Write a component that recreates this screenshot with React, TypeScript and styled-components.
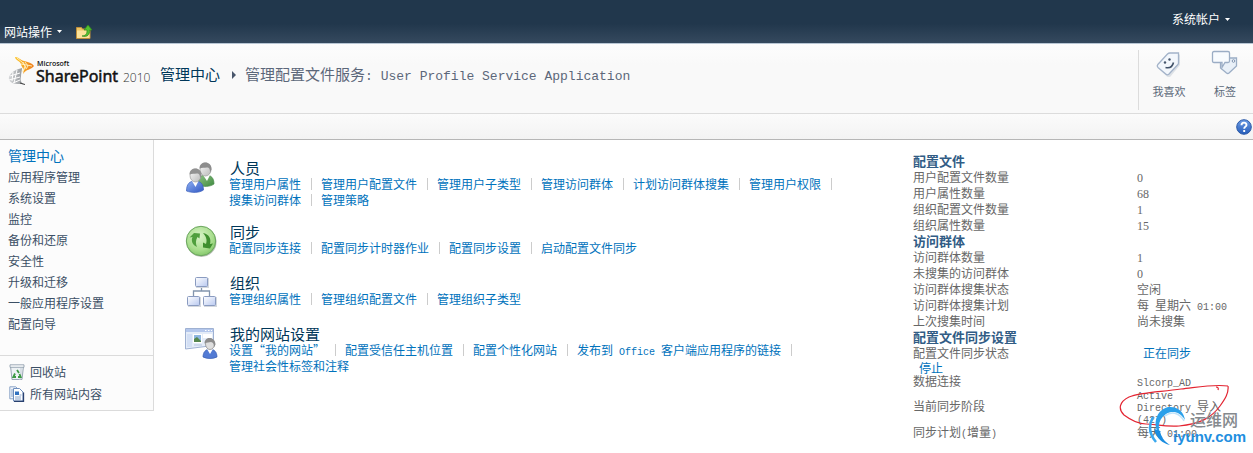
import React from 'react';
import styled, { createGlobalStyle } from 'styled-components';

const cjk = '"Noto Sans CJK SC", "Liberation Sans", sans-serif';

const GlobalStyle = createGlobalStyle`
  * { box-sizing: border-box; }
  body {
    margin: 0;
    background: #fff;
    color: #676767;
    font: 12px/16px ${cjk};
  }
  a { text-decoration: none; }
  button { font: inherit; border: 0; padding: 0; background: none; cursor: pointer; }
  svg { display: block; flex: none; }
  ul { list-style: none; margin: 0; padding: 0; }
`;

const Latin = styled.span<{ $size?: number }>`
  font-family: "Liberation Mono", monospace;
  font-size: ${(p) => p.$size ?? 10}px;
  line-height: 0;
  white-space: pre-wrap;
`;

const Digits = styled.span`
  font-family: "Liberation Serif", serif;
  line-height: 0;
`;

const TopBar = styled.div`
  height: 44px;
  display: flex;
  justify-content: space-between;
  background: linear-gradient(#21374c 0, #21374c 55%, #35495e 100%);
  border-bottom: 1px solid #b8c6d4;
`;

const SiteActions = styled.div`
  display: flex;
  align-items: center;
  gap: 14px;
  padding: 20px 0 0 4px;
`;

const MenuButton = styled.button`
  display: flex;
  align-items: center;
  gap: 5px;
  color: #fff;
`;

const AccountMenu = styled(MenuButton)`
  align-self: flex-start;
  padding: 11px 23px 0 0;
`;

const Header = styled.header`
  height: 70px;
  display: flex;
  align-items: flex-start;
  padding-left: 8px;
  background: linear-gradient(#fdfdfd, #f9f9f9 30%);
  border-bottom: 1px solid #dcdcdc;
`;

const LogoLink = styled.a`
  margin-top: 11px;
  margin-right: 8px;
`;

const Title = styled.h1`
  flex: 1;
  display: flex;
  align-items: center;
  margin: 20px 0 0;
  font-size: 15px;
  line-height: 20px;
  font-weight: 400;
  color: #5c677a;
  a { color: #003759; }
  svg { margin: 2px 9px 0 12px; }
`;

const Social = styled.div`
  display: flex;
  margin-top: 6px;
  height: 60px;
  padding-left: 2px;
  border-left: 1px solid #dcdcdc;
`;

const SocialButton = styled.button`
  display: flex;
  flex-direction: column;
  align-items: center;
  width: 56px;
  gap: 5px;
  font-size: 11px;
  line-height: 16px;
  color: #5d6a7a;
`;

const Ribbon = styled.div`
  height: 26px;
  display: flex;
  justify-content: flex-end;
  align-items: center;
  padding-right: 1px;
  background: linear-gradient(#fbfbfb, #f3f3f3);
  border-bottom: 1px solid #b6b6b6;
`;

const Body = styled.div`
  display: grid;
  grid-template-columns: 154px minmax(0, 1fr) 340px;
  align-items: start;
`;

const Sidebar = styled.nav`
  background: #fcfcfc;
  border: solid #dbdbdb;
  border-width: 0 1px 1px 0;
`;

const NavList = styled.ul`
  padding: 5px 8px 21px;
  li { line-height: 21px; }
  a { color: #3b4f65; }
  li:first-child a { color: #0072bc; font-size: 14px; }
`;

const SpecialList = styled.ul`
  border-top: 1px solid #dbdbdb;
  padding: 5px 9px;
  a {
    display: flex;
    align-items: center;
    gap: 5px;
    height: 22px;
    color: #3b4f65;
  }
`;

const Main = styled.main`
  display: flex;
  flex-direction: column;
  gap: 16px;
  padding: 20px 0 0 31px;
`;

const Section = styled.section`
  display: flex;
  gap: 11px;
  min-height: 35px;
  svg { margin-top: 1px; }
`;

const SectionTitle = styled.h2`
  margin: 0;
  padding-left: 1px;
  font-size: 15px;
  line-height: 16px;
  font-weight: 400;
  color: #003759;
`;

const Links = styled.ul`
  display: flex;
  flex-wrap: wrap;
  li {
    display: flex;
    align-items: center;
    height: 16px;
  }
  li:not(:last-child)::after {
    content: '';
    width: 1px;
    height: 12px;
    margin: 0 9px 0 10px;
    background: #ccc;
  }
  a { color: #0072bc; white-space: nowrap; }
`;

const Stats = styled.aside`
  position: relative;
  padding: 13px 0 12px;
`;

const StatTable = styled.table`
  width: 100%;
  table-layout: fixed;
  border-collapse: collapse;
  th, td {
    padding: 0;
    text-align: left;
    font-weight: 400;
    vertical-align: middle;
    white-space: nowrap;
  }
  a { color: #0072bc; padding-left: 6px; }
`;

const LabelCol = styled.col`
  width: 224px;
`;

const GroupRow = styled.tr`
  height: 16px;
  th {
    color: #315c85;
    font-size: 13px;
    line-height: 16px;
    font-weight: 700;
  }
`;

const StatRow = styled.tr<{ $line?: number }>`
  line-height: ${(p) => p.$line ?? 16}px;
`;

const Annotation = styled.svg`
  position: absolute;
  right: 22px;
  bottom: 24px;
  pointer-events: none;
`;

const Watermark = styled.div`
  position: absolute;
  right: 0;
  bottom: 6px;
  display: flex;
  pointer-events: none;
`;

const WatermarkText = styled.div`
  margin-left: -17px;
  width: 80px;
  padding-top: 6px;
  font: 700 15px/18px "Liberation Sans", sans-serif;
  color: #1f8fe0;
  span {
    display: block;
    padding-left: 17px;
    font: 500 16px/18px ${cjk};
    color: #85898d;
  }
`;

const Caret = () => (
  <svg width="5" height="3" viewBox="0 0 5 3"><path d="M0 0h5L2.5 3z" fill="#fff" /></svg>
);

const FolderUp = () => (
  <svg width="16" height="16" viewBox="0 0 16 16">
    <path d="M.5 3.500h5l1 1.500h7.500v9.500H.5z" fill="#eec566" stroke="#c08f3a" />
    <path d="M1 6.500h12.500v7.500H1z" fill="#fbe29a" />
    <path d="M6 12c4.500-.5 5-2.500 5-6H8l4-5 4 5h-2.300c0 4.500-2 7.500-7.700 6z" fill="#55c02f" stroke="#2e8a1b" strokeWidth=".7" />
  </svg>
);

const Logo = () => (
  <svg width="144" height="32" viewBox="0 0 144 32" role="img" aria-label="Microsoft SharePoint 2010">
    <defs>
      <linearGradient id="lgO" x1="0" x2="1"><stop stopColor="#fdc82f" /><stop offset="1" stopColor="#ee7b1c" /></linearGradient>
      <linearGradient id="lgG" x1="0" x2="1"><stop stopColor="#d6d8da" /><stop offset="1" stopColor="#8e9296" /></linearGradient>
    </defs>
    <path d="M7 2c4 0 5 3 9 4 4 1 8 2 10 5-3 4-8 3-11 8 2-6-2-7-2-10C12 6 7 5 7 2z" fill="url(#lgO)" />
    <path d="M9 3l5 4 4 5-4 5M13 9l11 2M15 7l2 4-2 5M17 7l3 4-2 3" fill="none" stroke="#fff3c4" strokeWidth=".9" />
    <path d="M14 13c-4 1-11 3-13 9-1 4 3 7 8 7 3 0 5 0 7 .5-3-2-4-4-3-8 0-3 1-6 1-8.500z" fill="url(#lgG)" />
    <path d="M2 21l10-3M1 25l11-3M5 28l7-3M5 17l-1 9M9 15l-3 13" fill="none" stroke="#fff" strokeWidth="1" />
    <path d="M12 28l5 1.500" stroke="#444" />
    <text x="29" y="11" fontFamily="Open Sans, sans-serif" fontSize="7" fontWeight="600" fill="#111">Microsoft</text>
    <text x="28" y="27" fontFamily="Noto Sans, sans-serif" fontSize="16" fill="#111" stroke="#111" strokeWidth=".5">SharePoint</text>
    <text x="115" y="27" fontFamily="Open Sans, sans-serif" fontSize="12" fontWeight="300" fill="#333">2010</text>
  </svg>
);

const Crumb = () => (
  <svg width="4" height="8" viewBox="0 0 4 8"><path d="M0 0l4 4-4 4z" fill="#49566b" /></svg>
);

const LikeTag = () => (
  <svg width="28" height="28" viewBox="0 0 28 28">
    <path d="M4 15L15 4.500h10V15L15.500 26.500Q13.500 27.500 12 26.500L4 19Q3 16.500 4 15z" fill="#dde1e6" />
    <path d="M2.800 14.500L12.500 4q1-1 2.500-1h8.500v10q0 1-1 2L13.800 24.300Q12.300 25.500 11 24.300L3 17.500Q1.500 16 2.800 14.500z" fill="#f3f7fc" stroke="#a3b3c9" strokeWidth="1.300" />
    <circle cx="10" cy="12.500" r="1.200" fill="#46566c" /><circle cx="14.500" cy="9.500" r="1.200" fill="#46566c" />
    <path d="M10.500 17.500c4 1 7-1 8-5" fill="none" stroke="#3f5067" strokeWidth="1.600" />
  </svg>
);

const TagNote = () => (
  <svg width="28" height="28" viewBox="0 0 28 28">
    <path d="M9.500 15v-4L15 8h10.500v8L18 23q-1.200 1-2.500 0l-6-5z" fill="#e9f0f8" stroke="#9badc5" strokeWidth="1.300" />
    <circle cx="22.500" cy="11" r="1.300" fill="#fff" stroke="#7e93b0" />
    <path d="M3 1.500h14q1.500 0 1.500 1.500v8q0 1.500-1.500 1.500h-3L11 17.500v-5H3Q1.500 12.500 1.500 11V3Q1.500 1.500 3 1.500z" fill="#f8fbfe" stroke="#9badc5" strokeWidth="1.300" />
  </svg>
);

const HelpIcon = () => (
  <svg width="16" height="16" viewBox="0 0 16 16">
    <defs><linearGradient id="hp" x2="0" y2="1"><stop stopColor="#6d9de6" /><stop offset="1" stopColor="#255cb9" /></linearGradient></defs>
    <circle cx="8" cy="8" r="7.300" fill="url(#hp)" stroke="#2c5aa8" />
    <path d="M5.500 6.200c0-3.400 5-3.300 5-.3 0 1.700-2.300 1.800-2.300 3.800M8.200 11v2" fill="none" stroke="#fff" strokeWidth="1.900" />
  </svg>
);

const BinIcon = () => (
  <svg width="16" height="16" viewBox="0 0 16 16">
    <path d="M1.500 2h13L13 15.500H3z" fill="#eef2f5" stroke="#9aa7b4" />
    <path d="M1 .8h14v2.500H1z" fill="#fafcfd" stroke="#8796a5" strokeWidth=".8" />
    <path d="M12 4v11l-2 .2" stroke="#c5ced8" fill="none" />
    <path d="M8 6l2 3M10.500 10l1.200 3H9M7 13H4.300L6 9.500" fill="none" stroke="#3c9a43" strokeWidth="1.800" />
  </svg>
);

const PagesIcon = () => (
  <svg width="16" height="16" viewBox="0 0 16 16">
    <path d="M.8.8h6l3 3v9h-9z" fill="#f2f6fb" stroke="#8ba4c8" />
    <path d="M4.500 2.500h6l3.500 3.500v9h-9.500z" fill="#fff" stroke="#6f8fbe" />
    <path d="M14.500 6.500v9H5" fill="none" stroke="#28406e" strokeWidth="1.300" />
    <path d="M2 4h2M2 6h2M2 8h2M2 10h2M6 11h6M6 13h6M10.500 9h2" stroke="#8aa4c9" />
    <path d="M6 5.500h4v3.500H6z" fill="#3272c0" />
  </svg>
);

const PeopleIcon = () => (
  <svg width="33" height="33" viewBox="0 0 33 33">
    <defs>
      <linearGradient id="pg" x2="1" y2="1"><stop stopColor="#8fc387" /><stop offset="1" stopColor="#3e8a3e" /></linearGradient>
      <linearGradient id="pb" x2="1" y2="1"><stop stopColor="#8eb0f2" /><stop offset="1" stopColor="#3158c4" /></linearGradient>
      <linearGradient id="ph" x2="1" y2="1"><stop stopColor="#fafafa" /><stop offset="1" stopColor="#b9b9b9" /></linearGradient>
    </defs>
    <path d="M13 24c0-7 3-10 8-10s8 3 8 9c-4 3-11 3-16 1z" fill="url(#pg)" stroke="#4b8a4c" strokeWidth=".7" />
    <path d="M18 14l4 6 3-6z" fill="#fff" />
    <ellipse cx="20.500" cy="8.500" rx="5.500" ry="6.500" fill="url(#ph)" stroke="#9b9b9b" strokeWidth=".7" />
    <path d="M14.500 7.500c0-8 12.500-8 12 1l-1.500 3c0-4-1-5-3-5-3 .5-5 0-7.500 1z" fill="#8d8d8d" />
    <path d="M1.500 30c0-7 3-10 8.500-10s8.500 3 8.500 9c-4 3-12 3-17 1z" fill="url(#pb)" stroke="#3c60bb" strokeWidth=".7" />
    <path d="M7 20l3.500 6 3-6z" fill="#fff" />
    <ellipse cx="10.500" cy="14.500" rx="5.500" ry="6.500" fill="url(#ph)" stroke="#9b9b9b" strokeWidth=".7" />
    <path d="M4.500 13.500c0-8 12.500-8 12 1l-1.500 3c0-4-1-5-3-5-3 .5-5 0-7.500 1z" fill="#919191" />
  </svg>
);

const SyncIcon = () => (
  <svg width="33" height="33" viewBox="0 0 33 33">
    <defs><radialGradient id="sy" cx=".45" cy=".35" r=".75"><stop stopColor="#d8f3c8" /><stop offset=".6" stopColor="#a9de8e" /><stop offset="1" stopColor="#74bd5c" /></radialGradient></defs>
    <circle cx="16.500" cy="17" r="15" fill="#b9bfb6" />
    <circle cx="16" cy="16" r="14.700" fill="url(#sy)" stroke="#6ba55f" />
    <path d="M12 22C7 20 6 15 7.500 12L4.500 12.500 9 8 15 8.500 14.500 13.500 12.500 12c-2 3-2 7-.5 10z" fill="#4f9f3e" />
    <path d="M18 8c6 1 8.500 6 7 11l3-.5L25 23.500 18 22.500v-5l3 1.500c1.500-4 0-8-3-11z" fill="#3d8e2e" />
  </svg>
);

const OrgIcon = () => (
  <svg width="33" height="33" viewBox="0 0 33 33">
    <defs><linearGradient id="og" x2="1" y2="1"><stop stopColor="#fff" /><stop offset="1" stopColor="#b9c9f0" /></linearGradient></defs>
    <path d="M16.500 11v4M8.500 20v-5h16v5" fill="none" stroke="#8395ad" strokeWidth="1.300" />
    <g fill="#d4d8de"><rect x="11" y="2" width="13" height="10" /><rect x="3" y="21" width="13" height="10" /><rect x="19" y="21" width="13" height="10" /></g>
    <g fill="url(#og)" stroke="#8a9bc0">
      <rect x="10.500" y="1.500" width="12" height="9" rx="1" />
      <rect x="2.500" y="20.500" width="12" height="9" rx="1" />
      <rect x="18.500" y="20.500" width="12" height="9" rx="1" />
    </g>
  </svg>
);

const MySiteIcon = () => (
  <svg width="33" height="33" viewBox="0 0 33 33">
    <path d="M.5 1.500h28v17l-28 3.500z" fill="#e4ecf8" stroke="#9fb1d2" />
    <path d="M1 2h27v3H1z" fill="#b4c7ec" />
    <path d="M20 3.500h1.500M23 3.500h1.500M26 3.500h1" stroke="#fff" />
    <path d="M2 7h5v13H2z" fill="#d3dff4" />
    <path d="M18 7h9v4h-9z" fill="#fff" />
    <rect x="8.500" y="7.500" width="8" height="8" fill="#8db6e0" stroke="#fff" /><path d="M9 15v-3l3-2 4 4v1z" fill="#56874e" />
    <path d="M9 18h8" stroke="#b5c4df" />
    <path d="M18 30c0-5 3-8 7-8s7 3 7 8c-4 2-10 2-14 0z" fill="#537bd4" stroke="#365bb0" strokeWidth=".7" />
    <path d="M22 22l3 5 3-5z" fill="#fff" />
    <ellipse cx="25" cy="17" rx="4.500" ry="5.500" fill="#dedede" stroke="#868686" strokeWidth=".7" />
    <path d="M19.500 16.500c0-8 11-7 11 1l-1.500 3c0-4-1-5-3-5.500-2 .5-4 0-6.500 1.500z" fill="#8d8d8d" />
  </svg>
);

const Swoosh = () => (
  <svg width="42" height="42" viewBox="0 0 42 42">
    <path d="M15 34C4 27 5 7 20 3 30 2 36 8 37 16 32 8 25 6 18 10 9 16 9 27 15 34z" fill="#2ba0ea" />
    <path d="M5 13C0 22 2 31 8 38" fill="none" stroke="#3aa8ee" strokeWidth="2.500" />
    <path d="M6 25c3 10 8 14 16 16-6-4-9-8-10-14z" fill="#1b8de0" />
    <path d="M17 12c6-5 14-4 19 5" fill="none" stroke="#bfe3fa" strokeWidth="1.500" />
  </svg>
);

const navItems = ['管理中心', '应用程序管理', '系统设置', '监控', '备份和还原', '安全性', '升级和迁移', '一般应用程序设置', '配置向导'];

const sections: { title: string; icon: React.ReactNode; links: React.ReactNode[] }[] = [
  {
    title: '人员',
    icon: <PeopleIcon />,
    links: ['管理用户属性', '管理用户配置文件', '管理用户子类型', '管理访问群体', '计划访问群体搜集', '管理用户权限', '搜集访问群体', '管理策略'],
  },
  { title: '同步', icon: <SyncIcon />, links: ['配置同步连接', '配置同步计时器作业', '配置同步设置', '启动配置文件同步'] },
  { title: '组织', icon: <OrgIcon />, links: ['管理组织属性', '管理组织配置文件', '管理组织子类型'] },
  {
    title: '我的网站设置',
    icon: <MySiteIcon />,
    links: [
      '设置“我的网站”',
      '配置受信任主机位置',
      '配置个性化网站',
      <>发布到<Latin> Office </Latin>客户端应用程序的链接</>,
      '管理社会性标签和注释',
    ],
  },
];

type Stat = { label: React.ReactNode; value?: React.ReactNode; line?: number };

const groups: { title: string; rows: Stat[] }[] = [
  {
    title: '配置文件',
    rows: [
      { label: '用户配置文件数量', value: <Digits>0</Digits> },
      { label: '用户属性数量', value: <Digits>68</Digits> },
      { label: '组织配置文件数量', value: <Digits>1</Digits> },
      { label: '组织属性数量', value: <Digits>15</Digits> },
    ],
  },
  {
    title: '访问群体',
    rows: [
      { label: '访问群体数量', value: <Digits>1</Digits> },
      { label: '未搜集的访问群体', value: <Digits>0</Digits> },
      { label: '访问群体搜集状态', value: '空闲' },
      { label: '访问群体搜集计划', value: <>每<Latin> </Latin>星期六<Latin> 01:00</Latin></> },
      { label: '上次搜集时间', value: '尚未搜集' },
    ],
  },
  {
    title: '配置文件同步设置',
    rows: [
      { label: '配置文件同步状态', value: <a href="#status">正在同步</a> },
      { label: <a href="#stop">停止</a>, line: 13 },
      { label: '数据连接', value: <Latin>Slcorp_AD</Latin>, line: 14 },
      {
        label: '当前同步阶段',
        value: <><Latin>Active</Latin><br /><Latin>Directory </Latin>导入<br /><Latin>(427)</Latin></>,
        line: 12,
      },
      { label: <>同步计划<Latin>(</Latin>增量<Latin>)</Latin></>, value: <>每天<Latin> 01:00</Latin></> },
    ],
  },
];

export default function App() {
  return (
    <>
      <GlobalStyle />
      <TopBar>
        <SiteActions>
          <MenuButton>网站操作<Caret /></MenuButton>
          <button aria-label="向上导航"><FolderUp /></button>
        </SiteActions>
        <AccountMenu>系统帐户<Caret /></AccountMenu>
      </TopBar>
      <Header>
        <LogoLink href="#home"><Logo /></LogoLink>
        <Title>
          <a href="#central">管理中心</a>
          <Crumb />
          <span>管理配置文件服务<Latin $size={13}>: User Profile Service Application</Latin></span>
        </Title>
        <Social>
          <SocialButton><LikeTag />我喜欢</SocialButton>
          <SocialButton><TagNote />标签</SocialButton>
        </Social>
      </Header>
      <Ribbon>
        <button aria-label="帮助"><HelpIcon /></button>
      </Ribbon>
      <Body>
        <Sidebar>
          <NavList>
            {navItems.map((t) => <li key={t}><a href="#nav">{t}</a></li>)}
          </NavList>
          <SpecialList>
            <li><a href="#recycle"><BinIcon />回收站</a></li>
            <li><a href="#content"><PagesIcon />所有网站内容</a></li>
          </SpecialList>
        </Sidebar>
        <Main>
          {sections.map((s) => (
            <Section key={s.title}>
              {s.icon}
              <div>
                <SectionTitle>{s.title}</SectionTitle>
                <Links>
                  {s.links.map((l, i) => <li key={i}><a href="#link">{l}</a></li>)}
                </Links>
              </div>
            </Section>
          ))}
        </Main>
        <Stats>
          <StatTable>
            <colgroup><LabelCol /><col /></colgroup>
            {groups.map((g) => (
              <tbody key={g.title}>
                <GroupRow><th colSpan={2} scope="rowgroup">{g.title}</th></GroupRow>
                {g.rows.map((r, i) => (
                  <StatRow key={i} $line={r.line}>
                    <th scope="row">{r.label}</th>
                    <td>{r.value}</td>
                  </StatRow>
                ))}
              </tbody>
            ))}
          </StatTable>
          <Annotation width="112" height="44" viewBox="0 0 112 44" aria-hidden="true">
            <path d="M97 3q3 0 2 3M109 2C95 0 80 3 62 5 42 8 22 8 10 13 0 18-1 25 5 31c8 6 14 9 22 9 8 0 19 3 33 2 22-2 33-9 41-20 5-7 9-13 8-20" fill="none" stroke="#e32431" strokeWidth="1.200" />
          </Annotation>
          <Watermark>
            <Swoosh />
            <WatermarkText><span>运维网</span>iyunv.com</WatermarkText>
          </Watermark>
        </Stats>
      </Body>
    </>
  );
}
